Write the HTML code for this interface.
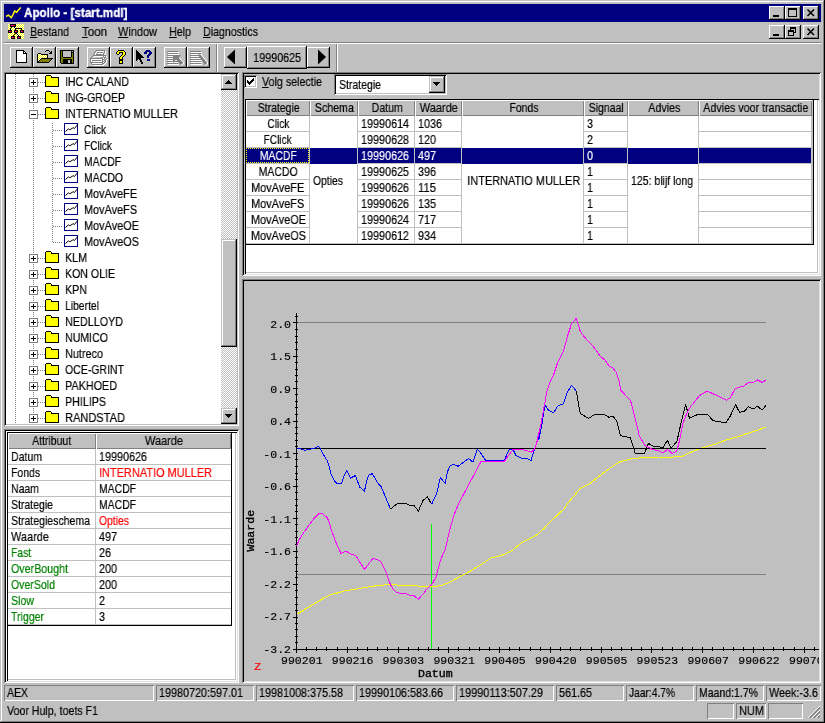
<!DOCTYPE html>
<html lang="nl"><head><meta charset="utf-8"><title>Apollo - [start.mdl]</title>
<style>
html,body{margin:0;padding:0;background:#c0c0c0;}
body{width:825px;height:723px;overflow:hidden;position:relative;font-family:"Liberation Sans",sans-serif;font-size:13px;color:#000;}
#win{position:absolute;left:0;top:0;width:825px;height:723px;background:#c0c0c0;overflow:hidden;}
.t{will-change:transform;-webkit-text-stroke:0.2px;}
#win div,#win span,#win svg{position:absolute;box-sizing:border-box;}
.t{white-space:nowrap;line-height:16px;height:16px;transform-origin:0 0;transform:scaleX(0.846);font-size:13px;}
.t u{text-decoration:underline;text-underline-offset:1px;text-decoration-thickness:1px;}
.tb{font-weight:bold;color:#fff;-webkit-text-stroke:0.35px;}
.btn{background:#c0c0c0;box-shadow:inset -1px -1px 0 #000,inset 1px 1px 0 #fff,inset -2px -2px 0 #808080;}
.sbtn{background:#c0c0c0;box-shadow:inset -1px -1px 0 #000,inset 1px 1px 0 #c0c0c0,inset -2px -2px 0 #808080,inset 2px 2px 0 #fff;}
.sunk{box-shadow:inset 1px 1px 0 #808080,inset -1px -1px 0 #fff;}
.pane{box-shadow:inset 1px 1px 0 #808080,inset -1px -1px 0 #fff,inset 2px 2px 0 #000,inset -2px -2px 0 #c0c0c0;}
.pane2{box-shadow:inset 1px 1px 0 #808080,inset -1px -1px 0 #fff,inset 2px 2px 0 #000,inset -2px -2px 0 #dfdfdf;}
.gridwin{background:#fff;box-shadow:inset 1px 1px 0 #000,inset -1px -1px 0 #fff,inset -2px -2px 0 #c0c0c0;}
.dither{background-image:conic-gradient(#fff 25%,#c0c0c0 0 50%,#fff 0 75%,#c0c0c0 0);background-size:2px 2px;}
.mono{font-family:"Liberation Mono",monospace;}
svg{overflow:visible;}
</style></head>
<body>
<div id="win">
<div style="left:0px;top:0px;width:825px;height:723px;box-shadow:inset -1px -1px 0 #000,inset 1px 1px 0 #c0c0c0,inset -2px -2px 0 #808080,inset 2px 2px 0 #fff;"></div>
<div id="titlebar" style="left:4px;top:4px;width:817px;height:18px;background:#000080;">
<svg width="16" height="16" style="left:2px;top:1px"><polyline points="0,11.4 2.5,10.2 5.3,12.6 7,9.6 8.6,6 10.7,7.2 12.2,5.3 13.5,4.1 14.7,2.3" fill="none" stroke="#ffff00" stroke-width="1.5"/></svg>
<span class="t tb" style="left:20px;top:1px;transform:scaleX(.895);">Apollo - [start.mdl]</span>
<div class="btn" style="left:765px;top:2px;width:16px;height:14px;"><div style="left:4px;top:9px;width:6px;height:2px;background:#000"></div></div>
<div class="btn" style="left:781px;top:2px;width:16px;height:14px;"><div style="left:3px;top:2px;width:9px;height:9px;border:1px solid #000;border-top-width:2px"></div></div>
<div class="btn" style="left:799px;top:2px;width:16px;height:14px;"><svg width="16" height="14" style="left:0;top:0"><path d="M4.5 3.5 L11 10 M11 3.5 L4.5 10" stroke="#000" stroke-width="1.6" fill="none"/></svg></div>
</div>
<div id="menubar" style="left:4px;top:22px;width:817px;height:20px;">
<svg width="16" height="15" style="left:4px;top:2px;overflow:hidden" shape-rendering="crispEdges"><defs><pattern id="dy" width="2" height="2" patternUnits="userSpaceOnUse"><rect width="2" height="2" fill="#ffff00"/><rect width="1" height="1" fill="#fff"/><rect x="1" y="1" width="1" height="1" fill="#fff"/></pattern></defs><rect width="16" height="16" fill="url(#dy)"/><g fill="#000"><rect x="2" y="0" width="6" height="3"/><rect x="0" y="6" width="4" height="3"/><rect x="6" y="6" width="4" height="3"/><rect x="12" y="6" width="4" height="3"/><rect x="3" y="12" width="4" height="3"/><rect x="9" y="12" width="4" height="3"/><rect x="3" y="3" width="1" height="1"/><rect x="2" y="4" width="1" height="2"/><rect x="6" y="3" width="1" height="1"/><rect x="7" y="4" width="1" height="2"/><rect x="8" y="4" width="6" height="1"/><rect x="13" y="5" width="1" height="1"/><rect x="7" y="9" width="2" height="1"/><rect x="6" y="10" width="1" height="1"/><rect x="5" y="11" width="1" height="1"/><rect x="9" y="10" width="1" height="1"/><rect x="10" y="11" width="1" height="1"/></g><g fill="#ff00c0"><rect x="3" y="1" width="2" height="1"/><rect x="1" y="7" width="1" height="1"/><rect x="7" y="7" width="1" height="1"/><rect x="13" y="7" width="1" height="1"/><rect x="4" y="13" width="1" height="1"/><rect x="10" y="13" width="1" height="1"/></g><g fill="#ff0000"><rect x="5" y="1" width="2" height="1"/><rect x="2" y="7" width="1" height="1"/><rect x="8" y="7" width="1" height="1"/><rect x="14" y="7" width="1" height="1"/><rect x="5" y="13" width="1" height="1"/><rect x="11" y="13" width="1" height="1"/></g></svg>
<span class="t" style="left:26px;top:2px;transform:scaleX(0.818);"><u>B</u>estand</span>
<span class="t" style="left:78px;top:2px;transform:scaleX(0.887);"><u>T</u>oon</span>
<span class="t" style="left:114px;top:2px;transform:scaleX(0.843);"><u>W</u>indow</span>
<span class="t" style="left:165px;top:2px;transform:scaleX(0.823);"><u>H</u>elp</span>
<span class="t" style="left:199px;top:2px;transform:scaleX(0.818);"><u>D</u>iagnostics</span>
<div class="btn" style="left:765px;top:3px;width:16px;height:14px;"><div style="left:4px;top:9px;width:6px;height:2px;background:#000"></div></div>
<div class="btn" style="left:781px;top:3px;width:16px;height:14px;"><div style="left:5px;top:2px;width:6px;height:6px;border:1px solid #000;border-top-width:2px"></div><div style="left:3px;top:5px;width:6px;height:6px;border:1px solid #000;border-top-width:2px;background:#c0c0c0"></div></div>
<div class="btn" style="left:799px;top:3px;width:16px;height:14px;"><svg width="16" height="14" style="left:0;top:0"><path d="M4.5 3.5 L11 10 M11 3.5 L4.5 10" stroke="#000" stroke-width="1.6" fill="none"/></svg></div>
</div>
<div style="left:4px;top:42px;width:817px;height:1px;background:#808080;"></div>
<div style="left:4px;top:43px;width:817px;height:1px;background:#fff;"></div>
<div id="toolbar" style="left:4px;top:44px;width:817px;height:28px;">
<div class="btn" style="left:6px;top:3px;width:23px;height:21px;"><svg width="23" height="21" style="left:0;top:0" shape-rendering="crispEdges"><path d="M6.5 3.5h7l3 3v9h-10z" fill="#fff" stroke="#000"/><path d="M13.5 3.5v3h3" fill="none" stroke="#000"/></svg></div>
<div class="btn" style="left:29px;top:3px;width:23px;height:21px;"><svg width="23" height="21" style="left:0;top:0" shape-rendering="crispEdges"><rect x="13" y="3" width="3" height="1" fill="#000"/><rect x="12" y="4" width="1" height="1" fill="#000"/><rect x="16" y="4" width="1" height="1" fill="#000"/><rect x="18" y="4" width="1" height="1" fill="#000"/><rect x="17" y="5" width="2" height="1" fill="#000"/><rect x="5" y="6" width="3" height="1" fill="#000"/><rect x="16" y="6" width="3" height="1" fill="#000"/><rect x="4" y="7" width="1" height="1" fill="#000"/><rect x="5" y="7" width="1" height="1" fill="#fff"/><rect x="6" y="7" width="1" height="1" fill="#ffff00"/><rect x="7" y="7" width="1" height="1" fill="#fff"/><rect x="8" y="7" width="7" height="1" fill="#000"/><rect x="4" y="8" width="1" height="1" fill="#000"/><rect x="5" y="8" width="1" height="1" fill="#ffff00"/><rect x="6" y="8" width="1" height="1" fill="#fff"/><rect x="7" y="8" width="1" height="1" fill="#ffff00"/><rect x="8" y="8" width="1" height="1" fill="#fff"/><rect x="9" y="8" width="1" height="1" fill="#ffff00"/><rect x="10" y="8" width="1" height="1" fill="#fff"/><rect x="11" y="8" width="1" height="1" fill="#ffff00"/><rect x="12" y="8" width="1" height="1" fill="#fff"/><rect x="13" y="8" width="1" height="1" fill="#ffff00"/><rect x="14" y="8" width="1" height="1" fill="#000"/><rect x="4" y="9" width="1" height="1" fill="#000"/><rect x="5" y="9" width="1" height="1" fill="#fff"/><rect x="6" y="9" width="1" height="1" fill="#ffff00"/><rect x="7" y="9" width="1" height="1" fill="#fff"/><rect x="8" y="9" width="1" height="1" fill="#ffff00"/><rect x="9" y="9" width="1" height="1" fill="#fff"/><rect x="10" y="9" width="1" height="1" fill="#ffff00"/><rect x="11" y="9" width="1" height="1" fill="#fff"/><rect x="12" y="9" width="1" height="1" fill="#ffff00"/><rect x="13" y="9" width="1" height="1" fill="#fff"/><rect x="14" y="9" width="1" height="1" fill="#000"/><rect x="4" y="10" width="1" height="1" fill="#000"/><rect x="5" y="10" width="1" height="1" fill="#ffff00"/><rect x="6" y="10" width="1" height="1" fill="#fff"/><rect x="7" y="10" width="1" height="1" fill="#ffff00"/><rect x="8" y="10" width="1" height="1" fill="#fff"/><rect x="9" y="10" width="1" height="1" fill="#ffff00"/><rect x="10" y="10" width="1" height="1" fill="#fff"/><rect x="11" y="10" width="1" height="1" fill="#ffff00"/><rect x="12" y="10" width="1" height="1" fill="#fff"/><rect x="13" y="10" width="1" height="1" fill="#ffff00"/><rect x="14" y="10" width="1" height="1" fill="#000"/><rect x="4" y="11" width="1" height="1" fill="#000"/><rect x="5" y="11" width="1" height="1" fill="#fff"/><rect x="6" y="11" width="1" height="1" fill="#ffff00"/><rect x="7" y="11" width="1" height="1" fill="#fff"/><rect x="8" y="11" width="12" height="1" fill="#000"/><rect x="4" y="12" width="1" height="1" fill="#000"/><rect x="5" y="12" width="1" height="1" fill="#ffff00"/><rect x="6" y="12" width="1" height="1" fill="#fff"/><rect x="7" y="12" width="1" height="1" fill="#000"/><rect x="8" y="12" width="10" height="1" fill="#808000"/><rect x="18" y="12" width="1" height="1" fill="#000"/><rect x="4" y="13" width="1" height="1" fill="#000"/><rect x="5" y="13" width="1" height="1" fill="#fff"/><rect x="6" y="13" width="1" height="1" fill="#000"/><rect x="7" y="13" width="10" height="1" fill="#808000"/><rect x="17" y="13" width="1" height="1" fill="#000"/><rect x="4" y="14" width="2" height="1" fill="#000"/><rect x="6" y="14" width="10" height="1" fill="#808000"/><rect x="16" y="14" width="1" height="1" fill="#000"/><rect x="4" y="15" width="12" height="1" fill="#000"/></svg></div>
<div class="btn" style="left:52px;top:3px;width:23px;height:21px;"><svg width="23" height="21" style="left:0;top:0" shape-rendering="crispEdges"><rect x="4" y="3" width="14" height="1" fill="#000"/><rect x="4" y="4" width="1" height="1" fill="#000"/><rect x="5" y="4" width="1" height="1" fill="#808000"/><rect x="6" y="4" width="1" height="1" fill="#000"/><rect x="7" y="4" width="8" height="1" fill="#c0c0c0"/><rect x="15" y="4" width="1" height="1" fill="#000"/><rect x="16" y="4" width="1" height="1" fill="#c0c0c0"/><rect x="17" y="4" width="1" height="1" fill="#000"/><rect x="4" y="5" width="1" height="1" fill="#000"/><rect x="5" y="5" width="1" height="1" fill="#808000"/><rect x="6" y="5" width="1" height="1" fill="#000"/><rect x="7" y="5" width="8" height="1" fill="#c0c0c0"/><rect x="15" y="5" width="3" height="1" fill="#000"/><rect x="4" y="6" width="1" height="1" fill="#000"/><rect x="5" y="6" width="1" height="1" fill="#808000"/><rect x="6" y="6" width="1" height="1" fill="#000"/><rect x="7" y="6" width="8" height="1" fill="#c0c0c0"/><rect x="15" y="6" width="1" height="1" fill="#000"/><rect x="16" y="6" width="1" height="1" fill="#808000"/><rect x="17" y="6" width="1" height="1" fill="#000"/><rect x="4" y="7" width="1" height="1" fill="#000"/><rect x="5" y="7" width="1" height="1" fill="#808000"/><rect x="6" y="7" width="1" height="1" fill="#000"/><rect x="7" y="7" width="8" height="1" fill="#c0c0c0"/><rect x="15" y="7" width="1" height="1" fill="#000"/><rect x="16" y="7" width="1" height="1" fill="#808000"/><rect x="17" y="7" width="1" height="1" fill="#000"/><rect x="4" y="8" width="1" height="1" fill="#000"/><rect x="5" y="8" width="1" height="1" fill="#808000"/><rect x="6" y="8" width="1" height="1" fill="#000"/><rect x="7" y="8" width="8" height="1" fill="#c0c0c0"/><rect x="15" y="8" width="1" height="1" fill="#000"/><rect x="16" y="8" width="1" height="1" fill="#808000"/><rect x="17" y="8" width="1" height="1" fill="#000"/><rect x="4" y="9" width="1" height="1" fill="#000"/><rect x="5" y="9" width="1" height="1" fill="#808000"/><rect x="6" y="9" width="1" height="1" fill="#000"/><rect x="7" y="9" width="8" height="1" fill="#c0c0c0"/><rect x="15" y="9" width="1" height="1" fill="#000"/><rect x="16" y="9" width="1" height="1" fill="#808000"/><rect x="17" y="9" width="1" height="1" fill="#000"/><rect x="4" y="10" width="1" height="1" fill="#000"/><rect x="5" y="10" width="2" height="1" fill="#808000"/><rect x="7" y="10" width="8" height="1" fill="#000"/><rect x="15" y="10" width="2" height="1" fill="#808000"/><rect x="17" y="10" width="1" height="1" fill="#000"/><rect x="4" y="11" width="1" height="1" fill="#000"/><rect x="5" y="11" width="12" height="1" fill="#808000"/><rect x="17" y="11" width="1" height="1" fill="#000"/><rect x="4" y="12" width="1" height="1" fill="#000"/><rect x="5" y="12" width="2" height="1" fill="#808000"/><rect x="7" y="12" width="9" height="1" fill="#000"/><rect x="16" y="12" width="1" height="1" fill="#808000"/><rect x="17" y="12" width="1" height="1" fill="#000"/><rect x="4" y="13" width="1" height="1" fill="#000"/><rect x="5" y="13" width="2" height="1" fill="#808000"/><rect x="7" y="13" width="5" height="1" fill="#000"/><rect x="12" y="13" width="2" height="1" fill="#c0c0c0"/><rect x="14" y="13" width="2" height="1" fill="#000"/><rect x="16" y="13" width="1" height="1" fill="#808000"/><rect x="17" y="13" width="1" height="1" fill="#000"/><rect x="4" y="14" width="1" height="1" fill="#000"/><rect x="5" y="14" width="2" height="1" fill="#808000"/><rect x="7" y="14" width="5" height="1" fill="#000"/><rect x="12" y="14" width="2" height="1" fill="#c0c0c0"/><rect x="14" y="14" width="2" height="1" fill="#000"/><rect x="16" y="14" width="1" height="1" fill="#808000"/><rect x="17" y="14" width="1" height="1" fill="#000"/><rect x="4" y="15" width="1" height="1" fill="#000"/><rect x="5" y="15" width="2" height="1" fill="#808000"/><rect x="7" y="15" width="5" height="1" fill="#000"/><rect x="12" y="15" width="2" height="1" fill="#c0c0c0"/><rect x="14" y="15" width="2" height="1" fill="#000"/><rect x="16" y="15" width="1" height="1" fill="#808000"/><rect x="17" y="15" width="1" height="1" fill="#000"/><rect x="5" y="16" width="13" height="1" fill="#000"/></svg></div>
<div class="btn" style="left:83px;top:3px;width:23px;height:21px;"><svg width="23" height="21" style="left:0;top:0" shape-rendering="crispEdges"><rect x="10" y="4" width="7" height="1" fill="#fff"/><rect x="18" y="4" width="1" height="1" fill="#fff"/><rect x="9" y="5" width="1" height="1" fill="#fff"/><rect x="18" y="5" width="1" height="1" fill="#fff"/><rect x="8" y="6" width="1" height="1" fill="#fff"/><rect x="11" y="6" width="5" height="1" fill="#fff"/><rect x="18" y="6" width="1" height="1" fill="#fff"/><rect x="8" y="7" width="1" height="1" fill="#fff"/><rect x="17" y="7" width="1" height="1" fill="#fff"/><rect x="7" y="9" width="9" height="1" fill="#fff"/><rect x="17" y="9" width="1" height="1" fill="#fff"/><rect x="19" y="9" width="1" height="1" fill="#fff"/><rect x="6" y="10" width="1" height="1" fill="#fff"/><rect x="19" y="10" width="1" height="1" fill="#fff"/><rect x="16" y="11" width="1" height="1" fill="#fff"/><rect x="18" y="11" width="1" height="1" fill="#fff"/><rect x="4" y="12" width="11" height="1" fill="#fff"/><rect x="20" y="12" width="1" height="1" fill="#fff"/><rect x="4" y="13" width="1" height="1" fill="#fff"/><rect x="16" y="13" width="1" height="1" fill="#fff"/><rect x="19" y="13" width="1" height="1" fill="#fff"/><rect x="4" y="14" width="1" height="1" fill="#fff"/><rect x="6" y="14" width="9" height="1" fill="#fff"/><rect x="19" y="14" width="1" height="1" fill="#fff"/><rect x="16" y="15" width="1" height="1" fill="#fff"/><rect x="19" y="15" width="1" height="1" fill="#fff"/><rect x="5" y="16" width="10" height="1" fill="#fff"/><rect x="18" y="16" width="1" height="1" fill="#fff"/><rect x="16" y="17" width="2" height="1" fill="#fff"/><rect x="6" y="18" width="11" height="1" fill="#fff"/><rect x="9" y="3" width="9" height="1" fill="#808080"/><rect x="8" y="4" width="1" height="1" fill="#808080"/><rect x="17" y="4" width="1" height="1" fill="#808080"/><rect x="7" y="5" width="1" height="1" fill="#808080"/><rect x="10" y="5" width="6" height="1" fill="#808080"/><rect x="17" y="5" width="1" height="1" fill="#808080"/><rect x="7" y="6" width="1" height="1" fill="#808080"/><rect x="16" y="6" width="1" height="1" fill="#808080"/><rect x="6" y="7" width="1" height="1" fill="#808080"/><rect x="9" y="7" width="6" height="1" fill="#808080"/><rect x="16" y="7" width="1" height="1" fill="#808080"/><rect x="6" y="8" width="13" height="1" fill="#808080"/><rect x="5" y="9" width="1" height="1" fill="#808080"/><rect x="16" y="9" width="1" height="1" fill="#808080"/><rect x="18" y="9" width="1" height="1" fill="#808080"/><rect x="4" y="10" width="1" height="1" fill="#808080"/><rect x="15" y="10" width="1" height="1" fill="#808080"/><rect x="17" y="10" width="2" height="1" fill="#808080"/><rect x="3" y="11" width="13" height="1" fill="#808080"/><rect x="17" y="11" width="1" height="1" fill="#808080"/><rect x="19" y="11" width="1" height="1" fill="#808080"/><rect x="3" y="12" width="1" height="1" fill="#808080"/><rect x="15" y="12" width="2" height="1" fill="#808080"/><rect x="18" y="12" width="1" height="1" fill="#808080"/><rect x="3" y="13" width="1" height="1" fill="#808080"/><rect x="5" y="13" width="9" height="1" fill="#808080"/><rect x="15" y="13" width="1" height="1" fill="#808080"/><rect x="17" y="13" width="2" height="1" fill="#808080"/><rect x="3" y="14" width="1" height="1" fill="#808080"/><rect x="15" y="14" width="2" height="1" fill="#808080"/><rect x="18" y="14" width="1" height="1" fill="#808080"/><rect x="3" y="15" width="13" height="1" fill="#808080"/><rect x="17" y="15" width="1" height="1" fill="#808080"/><rect x="4" y="16" width="1" height="1" fill="#808080"/><rect x="15" y="16" width="2" height="1" fill="#808080"/><rect x="5" y="17" width="11" height="1" fill="#808080"/></svg></div>
<div class="btn" style="left:106px;top:3px;width:23px;height:21px;"><svg width="23" height="21" style="left:0;top:0" shape-rendering="crispEdges"><rect x="8" y="3" width="6" height="1" fill="#000"/><rect x="7" y="4" width="1" height="1" fill="#000"/><rect x="8" y="4" width="6" height="1" fill="#ffff00"/><rect x="14" y="4" width="1" height="1" fill="#000"/><rect x="6" y="5" width="1" height="1" fill="#000"/><rect x="7" y="5" width="2" height="1" fill="#ffff00"/><rect x="9" y="5" width="4" height="1" fill="#000"/><rect x="13" y="5" width="2" height="1" fill="#ffff00"/><rect x="15" y="5" width="1" height="1" fill="#000"/><rect x="6" y="6" width="1" height="1" fill="#000"/><rect x="7" y="6" width="2" height="1" fill="#ffff00"/><rect x="9" y="6" width="1" height="1" fill="#000"/><rect x="12" y="6" width="1" height="1" fill="#000"/><rect x="13" y="6" width="2" height="1" fill="#ffff00"/><rect x="15" y="6" width="1" height="1" fill="#000"/><rect x="7" y="7" width="2" height="1" fill="#000"/><rect x="12" y="7" width="1" height="1" fill="#000"/><rect x="13" y="7" width="2" height="1" fill="#ffff00"/><rect x="15" y="7" width="1" height="1" fill="#000"/><rect x="11" y="8" width="1" height="1" fill="#000"/><rect x="12" y="8" width="2" height="1" fill="#ffff00"/><rect x="14" y="8" width="1" height="1" fill="#000"/><rect x="10" y="9" width="1" height="1" fill="#000"/><rect x="11" y="9" width="2" height="1" fill="#ffff00"/><rect x="13" y="9" width="1" height="1" fill="#000"/><rect x="9" y="10" width="1" height="1" fill="#000"/><rect x="10" y="10" width="2" height="1" fill="#ffff00"/><rect x="12" y="10" width="1" height="1" fill="#000"/><rect x="9" y="11" width="1" height="1" fill="#000"/><rect x="10" y="11" width="2" height="1" fill="#ffff00"/><rect x="12" y="11" width="1" height="1" fill="#000"/><rect x="9" y="12" width="4" height="1" fill="#000"/><rect x="9" y="13" width="4" height="1" fill="#000"/><rect x="9" y="14" width="1" height="1" fill="#000"/><rect x="10" y="14" width="2" height="1" fill="#ffff00"/><rect x="12" y="14" width="1" height="1" fill="#000"/><rect x="9" y="15" width="1" height="1" fill="#000"/><rect x="10" y="15" width="2" height="1" fill="#ffff00"/><rect x="12" y="15" width="1" height="1" fill="#000"/><rect x="9" y="16" width="4" height="1" fill="#000"/></svg></div>
<div class="btn" style="left:129px;top:3px;width:23px;height:21px;"><svg width="23" height="21" style="left:0;top:0" shape-rendering="crispEdges"><rect x="3" y="3" width="1" height="1" fill="#000"/><rect x="3" y="4" width="2" height="1" fill="#000"/><rect x="3" y="5" width="3" height="1" fill="#000"/><rect x="3" y="6" width="4" height="1" fill="#000"/><rect x="3" y="7" width="5" height="1" fill="#000"/><rect x="3" y="8" width="6" height="1" fill="#000"/><rect x="3" y="9" width="7" height="1" fill="#000"/><rect x="3" y="10" width="8" height="1" fill="#000"/><rect x="3" y="11" width="5" height="1" fill="#000"/><rect x="3" y="12" width="2" height="1" fill="#000"/><rect x="6" y="12" width="2" height="1" fill="#000"/><rect x="3" y="13" width="1" height="1" fill="#000"/><rect x="7" y="13" width="2" height="1" fill="#000"/><rect x="7" y="14" width="2" height="1" fill="#000"/><rect x="8" y="15" width="2" height="1" fill="#000"/><rect x="8" y="16" width="2" height="1" fill="#000"/><rect x="13" y="3" width="4" height="1" fill="#000080"/><rect x="12" y="4" width="6" height="1" fill="#000080"/><rect x="11" y="5" width="3" height="1" fill="#000080"/><rect x="16" y="5" width="3" height="1" fill="#000080"/><rect x="11" y="6" width="3" height="1" fill="#000080"/><rect x="16" y="6" width="3" height="1" fill="#000080"/><rect x="15" y="7" width="3" height="1" fill="#000080"/><rect x="14" y="8" width="3" height="1" fill="#000080"/><rect x="14" y="9" width="2" height="1" fill="#000080"/><rect x="14" y="10" width="2" height="1" fill="#000080"/><rect x="14" y="12" width="3" height="1" fill="#000080"/><rect x="14" y="13" width="3" height="1" fill="#000080"/></svg></div>
<div class="btn" style="left:160px;top:3px;width:23px;height:21px;"><svg width="23" height="21" style="left:0;top:0" shape-rendering="crispEdges"><rect x="3" y="4" width="11" height="1" fill="#808080"/><rect x="4" y="5" width="11" height="1" fill="#fff"/><rect x="3" y="6" width="11" height="1" fill="#808080"/><rect x="4" y="7" width="11" height="1" fill="#fff"/><rect x="3" y="8" width="11" height="1" fill="#808080"/><rect x="4" y="9" width="11" height="1" fill="#fff"/><rect x="3" y="10" width="11" height="1" fill="#808080"/><rect x="4" y="11" width="11" height="1" fill="#fff"/><rect x="3" y="12" width="11" height="1" fill="#808080"/><rect x="4" y="13" width="11" height="1" fill="#fff"/><rect x="3" y="14" width="11" height="1" fill="#808080"/><rect x="4" y="15" width="11" height="1" fill="#fff"/><rect x="3" y="16" width="11" height="1" fill="#808080"/><rect x="4" y="17" width="11" height="1" fill="#fff"/><path d="M9 8h8l-2.500 2.500 5 5.500-3 2-4.500-5.500-3 3.500z" fill="#808080" shape-rendering="auto"/><path d="M17 18.500l3-2.500-4.500-5" stroke="#fff" fill="none" shape-rendering="auto"/></svg></div>
<div class="btn" style="left:183px;top:3px;width:23px;height:21px;"><svg width="23" height="21" style="left:0;top:0" shape-rendering="crispEdges"><rect x="3" y="4" width="11" height="1" fill="#808080"/><rect x="4" y="5" width="11" height="1" fill="#fff"/><rect x="3" y="6" width="11" height="1" fill="#808080"/><rect x="4" y="7" width="11" height="1" fill="#fff"/><rect x="3" y="8" width="11" height="1" fill="#808080"/><rect x="4" y="9" width="11" height="1" fill="#fff"/><rect x="3" y="10" width="11" height="1" fill="#808080"/><rect x="4" y="11" width="11" height="1" fill="#fff"/><rect x="3" y="12" width="11" height="1" fill="#808080"/><rect x="4" y="13" width="11" height="1" fill="#fff"/><rect x="3" y="14" width="11" height="1" fill="#808080"/><rect x="4" y="15" width="11" height="1" fill="#fff"/><rect x="3" y="16" width="11" height="1" fill="#808080"/><rect x="4" y="17" width="11" height="1" fill="#fff"/><path d="M11 8l2-1 7 9-2 2z" fill="#808080" shape-rendering="auto"/><path d="M18.500 18.500l2.500-2.500-6.500-8" stroke="#fff" fill="none" shape-rendering="auto"/></svg></div>
<div style="left:212px;top:0px;width:1px;height:28px;background:#808080;"></div>
<div style="left:213px;top:0px;width:1px;height:28px;background:#fff;"></div>
<div style="left:332px;top:0px;width:1px;height:28px;background:#808080;"></div>
<div style="left:333px;top:0px;width:1px;height:28px;background:#fff;"></div>
<div class="btn" style="left:220px;top:3px;width:23px;height:21px;"><svg width="23" height="21" style="left:0;top:0"><path d="M11 2.500v15l-8-7.500z" fill="#000"/></svg></div>
<div class="btn" style="left:243px;top:2px;width:60px;height:23px;"><span class="t" style="left:-7.15px;top:4px;width:74.3px;text-align:center;transform-origin:50% 0;transform:scaleX(0.83);">19990625</span></div>
<div class="btn" style="left:303px;top:3px;width:23px;height:21px;"><svg width="23" height="21" style="left:0;top:0"><path d="M11 2.500v15l8-7.500z" fill="#000"/></svg></div>
</div>
<div id="tree" class="pane" style="left:4px;top:72px;width:235px;height:354px;background:#fff;">
<div style="left:2px;top:2px;width:215px;height:350px;overflow:hidden;">
<svg width="215" height="352" style="left:0;top:0" shape-rendering="crispEdges"><g stroke="#808080" stroke-dasharray="1 1" fill="none"><path d="M9.5 0v352"/><path d="M27.5 0v352"/><path d="M46.5 49v120"/><path d="M32 8.5h7"/><path d="M32 24.5h7"/><path d="M32 40.5h7"/><path d="M47 56.5h10"/><path d="M47 72.5h10"/><path d="M47 88.5h10"/><path d="M47 104.5h10"/><path d="M47 120.5h10"/><path d="M47 136.5h10"/><path d="M47 152.5h10"/><path d="M47 168.5h10"/><path d="M32 184.5h7"/><path d="M32 200.5h7"/><path d="M32 216.5h7"/><path d="M32 232.5h7"/><path d="M32 248.5h7"/><path d="M32 264.5h7"/><path d="M32 280.5h7"/><path d="M32 296.5h7"/><path d="M32 312.5h7"/><path d="M32 328.5h7"/><path d="M32 344.5h7"/></g><rect x="23.5" y="4.5" width="8" height="8" fill="#fff" stroke="#808080"/><path d="M25 8.5h5" stroke="#000"/><path d="M27.5 6v5" stroke="#000"/><path d="M39.5 2.5l1-1h4l1 1v1h7v9h-13z" fill="#ffff00" stroke="#000"/><rect x="23.5" y="20.5" width="8" height="8" fill="#fff" stroke="#808080"/><path d="M25 24.5h5" stroke="#000"/><path d="M27.5 22v5" stroke="#000"/><path d="M39.5 18.5l1-1h4l1 1v1h7v9h-13z" fill="#ffff00" stroke="#000"/><rect x="23.5" y="36.5" width="8" height="8" fill="#fff" stroke="#808080"/><path d="M25 40.5h5" stroke="#000"/><path d="M39.5 34.5l1-1h4l1 1v1h7v9h-13z" fill="#ffff00" stroke="#000"/><rect x="58.5" y="49.5" width="13" height="11" fill="#fff" stroke="#000080"/><path d="M59.5 57.5l3-2.700 1.300 1 3.400-2.100 1.300 0.800 2.900-3.700" stroke="#000" fill="none" shape-rendering="auto"/><rect x="58.5" y="65.5" width="13" height="11" fill="#fff" stroke="#000080"/><path d="M59.5 73.5l3-2.700 1.300 1 3.400-2.100 1.300 0.800 2.900-3.700" stroke="#000" fill="none" shape-rendering="auto"/><rect x="58.5" y="81.5" width="13" height="11" fill="#fff" stroke="#000080"/><path d="M59.5 89.5l3-2.700 1.300 1 3.400-2.100 1.300 0.800 2.900-3.700" stroke="#000" fill="none" shape-rendering="auto"/><rect x="58.5" y="97.5" width="13" height="11" fill="#fff" stroke="#000080"/><path d="M59.5 105.5l3-2.700 1.300 1 3.400-2.100 1.300 0.800 2.900-3.700" stroke="#000" fill="none" shape-rendering="auto"/><rect x="58.5" y="113.5" width="13" height="11" fill="#fff" stroke="#000080"/><path d="M59.5 121.5l3-2.700 1.300 1 3.400-2.100 1.300 0.800 2.900-3.700" stroke="#000" fill="none" shape-rendering="auto"/><rect x="58.5" y="129.5" width="13" height="11" fill="#fff" stroke="#000080"/><path d="M59.5 137.5l3-2.700 1.300 1 3.400-2.100 1.300 0.800 2.900-3.700" stroke="#000" fill="none" shape-rendering="auto"/><rect x="58.5" y="145.5" width="13" height="11" fill="#fff" stroke="#000080"/><path d="M59.5 153.5l3-2.700 1.300 1 3.400-2.100 1.300 0.800 2.900-3.700" stroke="#000" fill="none" shape-rendering="auto"/><rect x="58.5" y="161.5" width="13" height="11" fill="#fff" stroke="#000080"/><path d="M59.5 169.5l3-2.700 1.300 1 3.400-2.100 1.300 0.800 2.900-3.700" stroke="#000" fill="none" shape-rendering="auto"/><rect x="23.5" y="180.5" width="8" height="8" fill="#fff" stroke="#808080"/><path d="M25 184.5h5" stroke="#000"/><path d="M27.5 182v5" stroke="#000"/><path d="M39.5 178.5l1-1h4l1 1v1h7v9h-13z" fill="#ffff00" stroke="#000"/><rect x="23.5" y="196.5" width="8" height="8" fill="#fff" stroke="#808080"/><path d="M25 200.5h5" stroke="#000"/><path d="M27.5 198v5" stroke="#000"/><path d="M39.5 194.5l1-1h4l1 1v1h7v9h-13z" fill="#ffff00" stroke="#000"/><rect x="23.5" y="212.5" width="8" height="8" fill="#fff" stroke="#808080"/><path d="M25 216.5h5" stroke="#000"/><path d="M27.5 214v5" stroke="#000"/><path d="M39.5 210.5l1-1h4l1 1v1h7v9h-13z" fill="#ffff00" stroke="#000"/><rect x="23.5" y="228.5" width="8" height="8" fill="#fff" stroke="#808080"/><path d="M25 232.5h5" stroke="#000"/><path d="M27.5 230v5" stroke="#000"/><path d="M39.5 226.5l1-1h4l1 1v1h7v9h-13z" fill="#ffff00" stroke="#000"/><rect x="23.5" y="244.5" width="8" height="8" fill="#fff" stroke="#808080"/><path d="M25 248.5h5" stroke="#000"/><path d="M27.5 246v5" stroke="#000"/><path d="M39.5 242.5l1-1h4l1 1v1h7v9h-13z" fill="#ffff00" stroke="#000"/><rect x="23.5" y="260.5" width="8" height="8" fill="#fff" stroke="#808080"/><path d="M25 264.5h5" stroke="#000"/><path d="M27.5 262v5" stroke="#000"/><path d="M39.5 258.5l1-1h4l1 1v1h7v9h-13z" fill="#ffff00" stroke="#000"/><rect x="23.5" y="276.5" width="8" height="8" fill="#fff" stroke="#808080"/><path d="M25 280.5h5" stroke="#000"/><path d="M27.5 278v5" stroke="#000"/><path d="M39.5 274.5l1-1h4l1 1v1h7v9h-13z" fill="#ffff00" stroke="#000"/><rect x="23.5" y="292.5" width="8" height="8" fill="#fff" stroke="#808080"/><path d="M25 296.5h5" stroke="#000"/><path d="M27.5 294v5" stroke="#000"/><path d="M39.5 290.5l1-1h4l1 1v1h7v9h-13z" fill="#ffff00" stroke="#000"/><rect x="23.5" y="308.5" width="8" height="8" fill="#fff" stroke="#808080"/><path d="M25 312.5h5" stroke="#000"/><path d="M27.5 310v5" stroke="#000"/><path d="M39.5 306.5l1-1h4l1 1v1h7v9h-13z" fill="#ffff00" stroke="#000"/><rect x="23.5" y="324.5" width="8" height="8" fill="#fff" stroke="#808080"/><path d="M25 328.5h5" stroke="#000"/><path d="M27.5 326v5" stroke="#000"/><path d="M39.5 322.5l1-1h4l1 1v1h7v9h-13z" fill="#ffff00" stroke="#000"/><rect x="23.5" y="340.5" width="8" height="8" fill="#fff" stroke="#808080"/><path d="M25 344.5h5" stroke="#000"/><path d="M27.5 342v5" stroke="#000"/><path d="M39.5 338.5l1-1h4l1 1v1h7v9h-13z" fill="#ffff00" stroke="#000"/></svg>
<span class="t" style="left:59px;top:0px;transform:scaleX(0.813);">IHC CALAND</span>
<span class="t" style="left:59px;top:16px;transform:scaleX(0.806);">ING-GROEP</span>
<span class="t" style="left:59px;top:32px;transform:scaleX(0.843);">INTERNATIO MULLER</span>
<span class="t" style="left:78px;top:48px;transform:scaleX(0.781);">Click</span>
<span class="t" style="left:78px;top:64px;transform:scaleX(0.775);">FClick</span>
<span class="t" style="left:78px;top:80px;transform:scaleX(0.801);">MACDF</span>
<span class="t" style="left:78px;top:96px;transform:scaleX(0.806);">MACDO</span>
<span class="t" style="left:78px;top:112px;transform:scaleX(0.837);">MovAveFE</span>
<span class="t" style="left:78px;top:128px;transform:scaleX(0.837);">MovAveFS</span>
<span class="t" style="left:78px;top:144px;transform:scaleX(0.84);">MovAveOE</span>
<span class="t" style="left:78px;top:160px;transform:scaleX(0.84);">MovAveOS</span>
<span class="t" style="left:59px;top:176px;transform:scaleX(0.823);">KLM</span>
<span class="t" style="left:59px;top:192px;transform:scaleX(0.814);">KON OLIE</span>
<span class="t" style="left:59px;top:208px;transform:scaleX(0.823);">KPN</span>
<span class="t" style="left:59px;top:224px;transform:scaleX(0.797);">Libertel</span>
<span class="t" style="left:59px;top:240px;transform:scaleX(0.828);">NEDLLOYD</span>
<span class="t" style="left:59px;top:256px;transform:scaleX(0.816);">NUMICO</span>
<span class="t" style="left:59px;top:272px;transform:scaleX(0.835);">Nutreco</span>
<span class="t" style="left:59px;top:288px;transform:scaleX(0.809);">OCE-GRINT</span>
<span class="t" style="left:59px;top:304px;transform:scaleX(0.831);">PAKHOED</span>
<span class="t" style="left:59px;top:320px;transform:scaleX(0.822);">PHILIPS</span>
<span class="t" style="left:59px;top:336px;transform:scaleX(0.85);">RANDSTAD</span>
</div>
<div class="dither" style="left:217px;top:2px;width:16px;height:350px;"></div>
<div class="sbtn" style="left:217px;top:2px;width:16px;height:16px;"><svg width="16" height="16" style="left:0;top:0" shape-rendering="crispEdges"><path d="M4 10h7l-3.500-4z" fill="#000"/></svg></div>
<div class="sbtn" style="left:217px;top:336px;width:16px;height:16px;"><svg width="16" height="16" style="left:0;top:0" shape-rendering="crispEdges"><path d="M4 6h7l-3.500 4z" fill="#000"/></svg></div>
<div class="sbtn" style="left:217px;top:167px;width:16px;height:108px;"></div>
</div>
<div id="attrs" class="pane2" style="left:4px;top:429px;width:235px;height:254px;background:#fff;">
<div class="gridwin" style="left:3px;top:3px;width:230px;height:249px;"></div>
<div style="left:3px;top:3px;width:225px;height:194px;background:#000;"></div>
<div style="left:4px;top:4px;width:223px;height:192px;background:#c0c0c0;"></div>
<div style="left:4px;top:4px;width:88px;height:16px;background:#c0c0c0;box-shadow:inset 1px 1px 0 #fff,inset -1px -1px 0 #808080;"></div>
<div style="left:92px;top:4px;width:135px;height:16px;background:#c0c0c0;box-shadow:inset 1px 1px 0 #fff,inset -1px -1px 0 #808080;"></div>
<span class="t" style="left:-7.6px;top:4px;width:111.2px;text-align:center;transform-origin:50% 0;transform:scaleX(0.806);">Attribuut</span>
<span class="t" style="left:78.5px;top:4px;width:162.0px;text-align:center;transform-origin:50% 0;transform:scaleX(0.844);">Waarde</span>
<div style="left:4px;top:20px;width:87px;height:15px;background:#fff;"></div>
<div style="left:92px;top:20px;width:135px;height:15px;background:#fff;"></div>
<span class="t" style="left:7px;top:20px;color:#000;transform:scaleX(0.81);">Datum</span>
<span class="t" style="left:95px;top:20px;color:#000;transform:scaleX(0.83);">19990626</span>
<div style="left:4px;top:36px;width:87px;height:15px;background:#fff;"></div>
<div style="left:92px;top:36px;width:135px;height:15px;background:#fff;"></div>
<span class="t" style="left:7px;top:36px;color:#000;transform:scaleX(0.803);">Fonds</span>
<span class="t" style="left:95px;top:36px;color:#f00;transform:scaleX(0.843);">INTERNATIO MULLER</span>
<div style="left:4px;top:52px;width:87px;height:15px;background:#fff;"></div>
<div style="left:92px;top:52px;width:135px;height:15px;background:#fff;"></div>
<span class="t" style="left:7px;top:52px;color:#000;transform:scaleX(0.807);">Naam</span>
<span class="t" style="left:95px;top:52px;color:#000;transform:scaleX(0.801);">MACDF</span>
<div style="left:4px;top:68px;width:87px;height:15px;background:#fff;"></div>
<div style="left:92px;top:68px;width:135px;height:15px;background:#fff;"></div>
<span class="t" style="left:7px;top:68px;color:#000;transform:scaleX(0.807);">Strategie</span>
<span class="t" style="left:95px;top:68px;color:#000;transform:scaleX(0.801);">MACDF</span>
<div style="left:4px;top:84px;width:87px;height:15px;background:#fff;"></div>
<div style="left:92px;top:84px;width:135px;height:15px;background:#fff;"></div>
<span class="t" style="left:7px;top:84px;color:#000;transform:scaleX(0.81);">Strategieschema</span>
<span class="t" style="left:95px;top:84px;color:#f00;transform:scaleX(0.798);">Opties</span>
<div style="left:4px;top:100px;width:87px;height:15px;background:#fff;"></div>
<div style="left:92px;top:100px;width:135px;height:15px;background:#fff;"></div>
<span class="t" style="left:7px;top:100px;color:#000;transform:scaleX(0.844);">Waarde</span>
<span class="t" style="left:95px;top:100px;color:#000;transform:scaleX(0.83);">497</span>
<div style="left:4px;top:116px;width:87px;height:15px;background:#fff;"></div>
<div style="left:92px;top:116px;width:135px;height:15px;background:#fff;"></div>
<span class="t" style="left:7px;top:116px;color:#008000;transform:scaleX(0.791);">Fast</span>
<span class="t" style="left:95px;top:116px;color:#000;transform:scaleX(0.83);">26</span>
<div style="left:4px;top:132px;width:87px;height:15px;background:#fff;"></div>
<div style="left:92px;top:132px;width:135px;height:15px;background:#fff;"></div>
<span class="t" style="left:7px;top:132px;color:#008000;transform:scaleX(0.822);">OverBought</span>
<span class="t" style="left:95px;top:132px;color:#000;transform:scaleX(0.83);">200</span>
<div style="left:4px;top:148px;width:87px;height:15px;background:#fff;"></div>
<div style="left:92px;top:148px;width:135px;height:15px;background:#fff;"></div>
<span class="t" style="left:7px;top:148px;color:#008000;transform:scaleX(0.812);">OverSold</span>
<span class="t" style="left:95px;top:148px;color:#000;transform:scaleX(0.83);">200</span>
<div style="left:4px;top:164px;width:87px;height:15px;background:#fff;"></div>
<div style="left:92px;top:164px;width:135px;height:15px;background:#fff;"></div>
<span class="t" style="left:7px;top:164px;color:#008000;transform:scaleX(0.816);">Slow</span>
<span class="t" style="left:95px;top:164px;color:#000;transform:scaleX(0.83);">2</span>
<div style="left:4px;top:180px;width:87px;height:15px;background:#fff;"></div>
<div style="left:92px;top:180px;width:135px;height:15px;background:#fff;"></div>
<span class="t" style="left:7px;top:180px;color:#008000;transform:scaleX(0.811);">Trigger</span>
<span class="t" style="left:95px;top:180px;color:#000;transform:scaleX(0.83);">3</span>
</div>
<div id="tablepane" class="pane2" style="left:242px;top:72px;width:579px;height:204px;">
<div style="left:2px;top:3px;width:13px;height:13px;background:#fff;box-shadow:inset 1px 1px 0 #808080,inset -1px -1px 0 #fff,inset 2px 2px 0 #000,inset -2px -2px 0 #c0c0c0;"><svg width="13" height="13" style="left:0;top:0" shape-rendering="crispEdges"><path d="M3 5v3l2 2 5-5v-3l-5 5z" fill="#000"/></svg></div>
<span class="t" style="left:20px;top:2px;transform:scaleX(0.822);"><u>V</u>olg selectie</span>
<div style="left:92px;top:2px;width:113px;height:21px;background:#fff;box-shadow:inset 1px 1px 0 #808080,inset -1px -1px 0 #fff,inset 2px 2px 0 #000,inset -2px -2px 0 #c0c0c0;"><span class="t" style="left:5px;top:3px;transform:scaleX(0.807);">Strategie</span><div class="sbtn" style="left:95px;top:2px;width:16px;height:17px;"><svg width="16" height="17" style="left:0;top:0" shape-rendering="crispEdges"><path d="M4 6h7l-3.500 4z" fill="#000"/></svg></div></div>
<div class="gridwin" style="left:3px;top:27px;width:574px;height:175px;"></div>
<div style="left:3px;top:27px;width:569px;height:146px;background:#000;"></div>
<div style="left:4px;top:28px;width:567px;height:144px;background:#c0c0c0;"></div>
<div style="left:4px;top:28px;width:64px;height:16px;background:#c0c0c0;box-shadow:inset 1px 1px 0 #fff,inset -1px -1px 0 #808080;"></div>
<span class="t" style="left:-4.15px;top:28px;width:81.3px;text-align:center;transform-origin:50% 0;transform:scaleX(0.807);">Strategie</span>
<div style="left:68px;top:28px;width:48px;height:16px;background:#c0c0c0;box-shadow:inset 1px 1px 0 #fff,inset -1px -1px 0 #808080;"></div>
<span class="t" style="left:62.15px;top:28px;width:60.7px;text-align:center;transform-origin:50% 0;transform:scaleX(0.818);">Schema</span>
<div style="left:116px;top:28px;width:57px;height:16px;background:#c0c0c0;box-shadow:inset 1px 1px 0 #fff,inset -1px -1px 0 #808080;"></div>
<span class="t" style="left:108.8px;top:28px;width:72.4px;text-align:center;transform-origin:50% 0;transform:scaleX(0.81);">Datum</span>
<div style="left:173px;top:28px;width:47px;height:16px;background:#c0c0c0;box-shadow:inset 1px 1px 0 #fff,inset -1px -1px 0 #808080;"></div>
<span class="t" style="left:168.15px;top:28px;width:57.7px;text-align:center;transform-origin:50% 0;transform:scaleX(0.844);">Waarde</span>
<div style="left:220px;top:28px;width:122px;height:16px;background:#c0c0c0;box-shadow:inset 1px 1px 0 #fff,inset -1px -1px 0 #808080;"></div>
<span class="t" style="left:204.55px;top:28px;width:153.9px;text-align:center;transform-origin:50% 0;transform:scaleX(0.803);">Fonds</span>
<div style="left:342px;top:28px;width:44px;height:16px;background:#c0c0c0;box-shadow:inset 1px 1px 0 #fff,inset -1px -1px 0 #808080;"></div>
<span class="t" style="left:336.25px;top:28px;width:56.5px;text-align:center;transform-origin:50% 0;transform:scaleX(0.807);">Signaal</span>
<div style="left:386px;top:28px;width:71px;height:16px;background:#c0c0c0;box-shadow:inset 1px 1px 0 #fff,inset -1px -1px 0 #808080;"></div>
<span class="t" style="left:377.7px;top:28px;width:88.6px;text-align:center;transform-origin:50% 0;transform:scaleX(0.82);">Advies</span>
<div style="left:457px;top:28px;width:113px;height:16px;background:#c0c0c0;box-shadow:inset 1px 1px 0 #fff,inset -1px -1px 0 #808080;"></div>
<span class="t" style="left:444.2px;top:28px;width:139.6px;text-align:center;transform-origin:50% 0;transform:scaleX(0.821);">Advies voor transactie</span>
<div style="left:68px;top:44px;width:47px;height:127px;background:#fff;"></div>
<div style="left:68px;top:76px;width:47px;height:16px;background:#000080;"></div>
<div style="left:220px;top:44px;width:121px;height:127px;background:#fff;"></div>
<div style="left:220px;top:76px;width:121px;height:16px;background:#000080;"></div>
<div style="left:386px;top:44px;width:70px;height:127px;background:#fff;"></div>
<div style="left:386px;top:76px;width:70px;height:16px;background:#000080;"></div>
<div style="left:4px;top:44px;width:63px;height:15px;background:#fff;"></div>
<span class="t" style="left:-5.35px;top:44px;color:#000;width:82.7px;text-align:center;transform-origin:50% 0;transform:scaleX(0.781);">Click</span>
<div style="left:116px;top:44px;width:56px;height:15px;background:#fff;"></div>
<span class="t" style="left:119px;top:44px;color:#000;transform:scaleX(0.83);">19990614</span>
<div style="left:173px;top:44px;width:46px;height:15px;background:#fff;"></div>
<span class="t" style="left:176px;top:44px;color:#000;transform:scaleX(0.83);">1036</span>
<div style="left:342px;top:44px;width:43px;height:15px;background:#fff;"></div>
<span class="t" style="left:345px;top:44px;color:#000;transform:scaleX(0.83);">3</span>
<div style="left:457px;top:44px;width:112px;height:15px;background:#fff;"></div>
<div style="left:4px;top:60px;width:63px;height:15px;background:#fff;"></div>
<span class="t" style="left:-5.65px;top:60px;color:#000;width:83.3px;text-align:center;transform-origin:50% 0;transform:scaleX(0.775);">FClick</span>
<div style="left:116px;top:60px;width:56px;height:15px;background:#fff;"></div>
<span class="t" style="left:119px;top:60px;color:#000;transform:scaleX(0.83);">19990628</span>
<div style="left:173px;top:60px;width:46px;height:15px;background:#fff;"></div>
<span class="t" style="left:176px;top:60px;color:#000;transform:scaleX(0.83);">120</span>
<div style="left:342px;top:60px;width:43px;height:15px;background:#fff;"></div>
<span class="t" style="left:345px;top:60px;color:#000;transform:scaleX(0.83);">2</span>
<div style="left:457px;top:60px;width:112px;height:15px;background:#fff;"></div>
<div style="left:4px;top:76px;width:63px;height:15px;background:#000080;"></div>
<span class="t" style="left:-4.35px;top:76px;color:#fff;width:80.7px;text-align:center;transform-origin:50% 0;transform:scaleX(0.801);">MACDF</span>
<div style="left:116px;top:76px;width:56px;height:15px;background:#000080;"></div>
<span class="t" style="left:119px;top:76px;color:#fff;transform:scaleX(0.83);">19990626</span>
<div style="left:173px;top:76px;width:46px;height:15px;background:#000080;"></div>
<span class="t" style="left:176px;top:76px;color:#fff;transform:scaleX(0.83);">497</span>
<div style="left:342px;top:76px;width:43px;height:15px;background:#000080;"></div>
<span class="t" style="left:345px;top:76px;color:#fff;transform:scaleX(0.83);">0</span>
<div style="left:457px;top:76px;width:112px;height:15px;background:#000080;"></div>
<div style="left:4px;top:92px;width:63px;height:15px;background:#fff;"></div>
<span class="t" style="left:-4.1px;top:92px;color:#000;width:80.2px;text-align:center;transform-origin:50% 0;transform:scaleX(0.806);">MACDO</span>
<div style="left:116px;top:92px;width:56px;height:15px;background:#fff;"></div>
<span class="t" style="left:119px;top:92px;color:#000;transform:scaleX(0.83);">19990625</span>
<div style="left:173px;top:92px;width:46px;height:15px;background:#fff;"></div>
<span class="t" style="left:176px;top:92px;color:#000;transform:scaleX(0.83);">396</span>
<div style="left:342px;top:92px;width:43px;height:15px;background:#fff;"></div>
<span class="t" style="left:345px;top:92px;color:#000;transform:scaleX(0.83);">1</span>
<div style="left:457px;top:92px;width:112px;height:15px;background:#fff;"></div>
<div style="left:4px;top:108px;width:63px;height:15px;background:#fff;"></div>
<span class="t" style="left:-2.65px;top:108px;color:#000;width:77.3px;text-align:center;transform-origin:50% 0;transform:scaleX(0.837);">MovAveFE</span>
<div style="left:116px;top:108px;width:56px;height:15px;background:#fff;"></div>
<span class="t" style="left:119px;top:108px;color:#000;transform:scaleX(0.83);">19990626</span>
<div style="left:173px;top:108px;width:46px;height:15px;background:#fff;"></div>
<span class="t" style="left:176px;top:108px;color:#000;transform:scaleX(0.868);">115</span>
<div style="left:342px;top:108px;width:43px;height:15px;background:#fff;"></div>
<span class="t" style="left:345px;top:108px;color:#000;transform:scaleX(0.83);">1</span>
<div style="left:457px;top:108px;width:112px;height:15px;background:#fff;"></div>
<div style="left:4px;top:124px;width:63px;height:15px;background:#fff;"></div>
<span class="t" style="left:-2.65px;top:124px;color:#000;width:77.3px;text-align:center;transform-origin:50% 0;transform:scaleX(0.837);">MovAveFS</span>
<div style="left:116px;top:124px;width:56px;height:15px;background:#fff;"></div>
<span class="t" style="left:119px;top:124px;color:#000;transform:scaleX(0.83);">19990626</span>
<div style="left:173px;top:124px;width:46px;height:15px;background:#fff;"></div>
<span class="t" style="left:176px;top:124px;color:#000;transform:scaleX(0.83);">135</span>
<div style="left:342px;top:124px;width:43px;height:15px;background:#fff;"></div>
<span class="t" style="left:345px;top:124px;color:#000;transform:scaleX(0.83);">1</span>
<div style="left:457px;top:124px;width:112px;height:15px;background:#fff;"></div>
<div style="left:4px;top:140px;width:63px;height:15px;background:#fff;"></div>
<span class="t" style="left:-2.5px;top:140px;color:#000;width:77.0px;text-align:center;transform-origin:50% 0;transform:scaleX(0.84);">MovAveOE</span>
<div style="left:116px;top:140px;width:56px;height:15px;background:#fff;"></div>
<span class="t" style="left:119px;top:140px;color:#000;transform:scaleX(0.83);">19990624</span>
<div style="left:173px;top:140px;width:46px;height:15px;background:#fff;"></div>
<span class="t" style="left:176px;top:140px;color:#000;transform:scaleX(0.83);">717</span>
<div style="left:342px;top:140px;width:43px;height:15px;background:#fff;"></div>
<span class="t" style="left:345px;top:140px;color:#000;transform:scaleX(0.83);">1</span>
<div style="left:457px;top:140px;width:112px;height:15px;background:#fff;"></div>
<div style="left:4px;top:156px;width:63px;height:15px;background:#fff;"></div>
<span class="t" style="left:-2.5px;top:156px;color:#000;width:77.0px;text-align:center;transform-origin:50% 0;transform:scaleX(0.84);">MovAveOS</span>
<div style="left:116px;top:156px;width:56px;height:15px;background:#fff;"></div>
<span class="t" style="left:119px;top:156px;color:#000;transform:scaleX(0.83);">19990612</span>
<div style="left:173px;top:156px;width:46px;height:15px;background:#fff;"></div>
<span class="t" style="left:176px;top:156px;color:#000;transform:scaleX(0.83);">934</span>
<div style="left:342px;top:156px;width:43px;height:15px;background:#fff;"></div>
<span class="t" style="left:345px;top:156px;color:#000;transform:scaleX(0.83);">1</span>
<div style="left:457px;top:156px;width:112px;height:15px;background:#fff;"></div>
<div style="left:4px;top:76px;width:63px;height:15px;border:1px dotted #ffff00;"></div>
<span class="t" style="left:71px;top:101px;transform:scaleX(0.798);">Opties</span>
<span class="t" style="left:208.75px;top:101px;width:145.5px;text-align:center;transform-origin:50% 0;transform:scaleX(0.843);">INTERNATIO MULLER</span>
<span class="t" style="left:389px;top:101px;transform:scaleX(0.809);">125: blijf long</span>
</div>
<div id="chartpane" class="pane2" style="left:242px;top:279px;width:579px;height:404px;">
<svg id="chart" width="575" height="400" viewBox="244 281 575 400" style="left:2px;top:2px;overflow:hidden;will-change:transform">
<rect x="244" y="281" width="575" height="400" fill="#c0c0c0"/>
<g shape-rendering="crispEdges">
<rect x="297" y="322" width="469" height="1" fill="#808080"/>
<rect x="297" y="574" width="469" height="1" fill="#808080"/>
<rect x="296" y="313" width="1" height="337" fill="#000"/>
<rect x="296" y="649" width="523" height="1" fill="#000"/>
<rect x="293" y="322" width="5" height="1" fill="#000"/>
<rect x="295" y="329" width="3" height="1" fill="#000"/>
<rect x="295" y="336" width="3" height="1" fill="#000"/>
<rect x="295" y="342" width="3" height="1" fill="#000"/>
<rect x="295" y="349" width="3" height="1" fill="#000"/>
<rect x="293" y="356" width="5" height="1" fill="#000"/>
<rect x="295" y="362" width="3" height="1" fill="#000"/>
<rect x="295" y="369" width="3" height="1" fill="#000"/>
<rect x="295" y="375" width="3" height="1" fill="#000"/>
<rect x="295" y="381" width="3" height="1" fill="#000"/>
<rect x="293" y="388" width="5" height="1" fill="#000"/>
<rect x="295" y="394" width="3" height="1" fill="#000"/>
<rect x="295" y="401" width="3" height="1" fill="#000"/>
<rect x="295" y="407" width="3" height="1" fill="#000"/>
<rect x="295" y="414" width="3" height="1" fill="#000"/>
<rect x="293" y="421" width="5" height="1" fill="#000"/>
<rect x="295" y="427" width="3" height="1" fill="#000"/>
<rect x="295" y="433" width="3" height="1" fill="#000"/>
<rect x="295" y="440" width="3" height="1" fill="#000"/>
<rect x="295" y="446" width="3" height="1" fill="#000"/>
<rect x="293" y="453" width="5" height="1" fill="#000"/>
<rect x="295" y="459" width="3" height="1" fill="#000"/>
<rect x="295" y="466" width="3" height="1" fill="#000"/>
<rect x="295" y="473" width="3" height="1" fill="#000"/>
<rect x="295" y="479" width="3" height="1" fill="#000"/>
<rect x="293" y="486" width="5" height="1" fill="#000"/>
<rect x="295" y="492" width="3" height="1" fill="#000"/>
<rect x="295" y="499" width="3" height="1" fill="#000"/>
<rect x="295" y="505" width="3" height="1" fill="#000"/>
<rect x="295" y="511" width="3" height="1" fill="#000"/>
<rect x="293" y="518" width="5" height="1" fill="#000"/>
<rect x="295" y="524" width="3" height="1" fill="#000"/>
<rect x="295" y="531" width="3" height="1" fill="#000"/>
<rect x="295" y="537" width="3" height="1" fill="#000"/>
<rect x="295" y="544" width="3" height="1" fill="#000"/>
<rect x="293" y="551" width="5" height="1" fill="#000"/>
<rect x="295" y="557" width="3" height="1" fill="#000"/>
<rect x="295" y="564" width="3" height="1" fill="#000"/>
<rect x="295" y="571" width="3" height="1" fill="#000"/>
<rect x="295" y="577" width="3" height="1" fill="#000"/>
<rect x="293" y="584" width="5" height="1" fill="#000"/>
<rect x="295" y="590" width="3" height="1" fill="#000"/>
<rect x="295" y="597" width="3" height="1" fill="#000"/>
<rect x="295" y="604" width="3" height="1" fill="#000"/>
<rect x="295" y="610" width="3" height="1" fill="#000"/>
<rect x="293" y="617" width="5" height="1" fill="#000"/>
<rect x="295" y="623" width="3" height="1" fill="#000"/>
<rect x="295" y="629" width="3" height="1" fill="#000"/>
<rect x="295" y="636" width="3" height="1" fill="#000"/>
<rect x="295" y="642" width="3" height="1" fill="#000"/>
<rect x="293" y="649" width="5" height="1" fill="#000"/>
<rect x="295" y="316" width="3" height="1" fill="#000"/>
<rect x="296" y="647" width="1" height="6" fill="#000"/>
<rect x="306" y="647" width="1" height="4" fill="#000"/>
<rect x="316" y="647" width="1" height="4" fill="#000"/>
<rect x="326" y="647" width="1" height="4" fill="#000"/>
<rect x="337" y="647" width="1" height="4" fill="#000"/>
<rect x="347" y="647" width="1" height="6" fill="#000"/>
<rect x="357" y="647" width="1" height="4" fill="#000"/>
<rect x="367" y="647" width="1" height="4" fill="#000"/>
<rect x="377" y="647" width="1" height="4" fill="#000"/>
<rect x="387" y="647" width="1" height="4" fill="#000"/>
<rect x="398" y="647" width="1" height="6" fill="#000"/>
<rect x="408" y="647" width="1" height="4" fill="#000"/>
<rect x="418" y="647" width="1" height="4" fill="#000"/>
<rect x="428" y="647" width="1" height="4" fill="#000"/>
<rect x="438" y="647" width="1" height="4" fill="#000"/>
<rect x="448" y="647" width="1" height="6" fill="#000"/>
<rect x="458" y="647" width="1" height="4" fill="#000"/>
<rect x="469" y="647" width="1" height="4" fill="#000"/>
<rect x="479" y="647" width="1" height="4" fill="#000"/>
<rect x="489" y="647" width="1" height="4" fill="#000"/>
<rect x="499" y="647" width="1" height="6" fill="#000"/>
<rect x="509" y="647" width="1" height="4" fill="#000"/>
<rect x="519" y="647" width="1" height="4" fill="#000"/>
<rect x="530" y="647" width="1" height="4" fill="#000"/>
<rect x="540" y="647" width="1" height="4" fill="#000"/>
<rect x="550" y="647" width="1" height="6" fill="#000"/>
<rect x="560" y="647" width="1" height="4" fill="#000"/>
<rect x="570" y="647" width="1" height="4" fill="#000"/>
<rect x="580" y="647" width="1" height="4" fill="#000"/>
<rect x="591" y="647" width="1" height="4" fill="#000"/>
<rect x="601" y="647" width="1" height="6" fill="#000"/>
<rect x="611" y="647" width="1" height="4" fill="#000"/>
<rect x="621" y="647" width="1" height="4" fill="#000"/>
<rect x="631" y="647" width="1" height="4" fill="#000"/>
<rect x="641" y="647" width="1" height="4" fill="#000"/>
<rect x="651" y="647" width="1" height="6" fill="#000"/>
<rect x="662" y="647" width="1" height="4" fill="#000"/>
<rect x="672" y="647" width="1" height="4" fill="#000"/>
<rect x="682" y="647" width="1" height="4" fill="#000"/>
<rect x="692" y="647" width="1" height="4" fill="#000"/>
<rect x="702" y="647" width="1" height="6" fill="#000"/>
<rect x="712" y="647" width="1" height="4" fill="#000"/>
<rect x="723" y="647" width="1" height="4" fill="#000"/>
<rect x="733" y="647" width="1" height="4" fill="#000"/>
<rect x="743" y="647" width="1" height="4" fill="#000"/>
<rect x="753" y="647" width="1" height="6" fill="#000"/>
<rect x="763" y="647" width="1" height="4" fill="#000"/>
<rect x="773" y="647" width="1" height="4" fill="#000"/>
<rect x="783" y="647" width="1" height="4" fill="#000"/>
<rect x="794" y="647" width="1" height="4" fill="#000"/>
<rect x="804" y="647" width="1" height="6" fill="#000"/>
<rect x="814" y="647" width="1" height="4" fill="#000"/>
<rect x="431" y="524" width="1" height="125" fill="#00ff00"/>
</g>
<polyline shape-rendering="crispEdges" fill="none" stroke="#ffff00" stroke-width="1.0" stroke-linejoin="round" points="296.8,613.8 301.6,611.5 309.4,606.6 319.1,600.8 330.7,594.6 337.5,593.0 346.2,590.5 355.9,589.2 363.7,587.6 375.3,585.9 385.0,584.9 394.7,584.7 400.6,585.5 414.1,585.5 419.0,586.2 425.8,586.4 437.4,586.1 443.2,584.9 450.0,582.0 472.3,570.0 479.1,565.8 490.7,558.0 502.4,555.1 512.1,550.6 521.8,542.5 536.3,535.3 543.1,529.3 550.9,521.2 564.4,508.5 567.3,503.7 574.1,495.9 580.3,488.2 589.6,483.9 597.4,477.5 605.2,471.7 610.0,468.2 619.7,461.8 629.4,459.3 643.0,457.4 658.5,457.0 673.0,457.0 682.7,456.0 693.4,451.2 705.0,446.9 714.7,444.4 726.4,439.9 736.1,437.2 747.7,433.3 757.4,430.2 766.1,426.9"/>
<rect x="297" y="448" width="469" height="1" fill="#000" shape-rendering="crispEdges"/>
<polyline shape-rendering="crispEdges" fill="none" stroke="#0000ff" stroke-width="1.0" stroke-linejoin="round" points="296.8,448.8 300.7,449.0 304.5,450.2 309.4,449.4 314.2,448.4 318.1,446.5 320.1,447.8 322.0,452.3 326.9,460.1 328.8,464.9 330.7,473.6 333.6,479.5 336.5,483.3 341.4,483.3 344.3,475.6 346.6,470.7 350.5,478.1 355.4,475.6 356.9,479.5 359.8,487.2 364.3,491.1 365.6,486.2 367.6,477.5 369.1,475.0 372.4,473.6 377.3,482.4 381.2,486.8 385.0,495.9 390.5,509.1"/>
<polyline shape-rendering="crispEdges" fill="none" stroke="#000" stroke-width="1.0" stroke-linejoin="round" points="390.5,509.1 395.7,504.7 399.0,503.3 406.0,503.3 409.7,505.3 414.1,505.6 418.4,511.1 420.3,506.6 422.9,500.8 427.3,496.5 431.6,504.3"/>
<polyline shape-rendering="crispEdges" fill="none" stroke="#0000ff" stroke-width="1.0" stroke-linejoin="round" points="431.6,504.3 436.4,494.0 438.4,486.2 440.3,477.5 445.2,483.3 447.5,471.7 450.0,465.9 453.9,464.3 458.1,466.3 462.0,463.4 468.4,458.5 472.9,462.0 477.2,449.4 481.0,453.3 485.9,461.0 488.8,460.4 497.5,460.4 504.3,461.0 507.2,453.3 509.2,450.0 513.0,449.4 515.9,455.2 521.8,458.5 526.6,458.5 531.1,460.4 533.4,452.9 534.8,448.4 537.3,441.6 540.2,430.0 538.7,440.0 542.0,424.1 544.9,404.7 548.8,410.6 553.6,412.5 558.1,405.7 563.3,403.8 567.2,392.1 571.7,385.3 575.9,390.8"/>
<polyline shape-rendering="crispEdges" fill="none" stroke="#000" stroke-width="1.0" stroke-linejoin="round" points="575.9,390.8 576.9,394.1 578.3,402.8 580.2,413.5 588.5,418.3 594.4,414.8 604.1,414.4 608.9,417.3 612.8,416.0 616.7,421.2 620.6,435.8 630.2,437.7 632.9,445.3 635.2,453.5 644.5,453.5 648.4,443.4 653.6,446.3 663.3,447.3 667.4,440.1 671.1,448.2 676.9,441.5 680.8,424.0 685.6,404.6 689.5,418.2 698.2,414.3 707.9,414.7 712.8,420.5 717.6,421.7 726.0,422.5 730.2,416.2 735.5,404.6 739.6,412.4 744.4,411.4 748.3,406.5 753.1,409.1 757.4,406.2 762.2,410.0 766.1,405.0"/>
<polyline shape-rendering="crispEdges" fill="none" stroke="#ff00ff" stroke-width="1.0" stroke-linejoin="round" points="296.8,545.9 298.7,540.7 301.6,535.8 308.4,526.0 314.2,518.2 319.1,513.4 322.0,513.4 326.9,517.3 328.8,521.2 331.7,530.9 335.6,541.6 340.8,553.3 346.2,551.3 351.1,554.2 355.9,555.6 360.8,563.9 364.7,569.4 369.5,562.6 373.0,558.5 377.3,559.5 380.8,561.4 386.6,573.6 389.9,583.3 392.8,588.8 395.7,591.7 399.6,593.4 406.0,593.4 409.7,595.4 414.1,595.6 418.4,599.4 423.8,593.0 427.7,588.2 431.6,584.9 435.8,577.5 438.4,567.8 440.9,559.1 445.2,549.4 447.1,541.6 448.7,533.9 450.0,528.9 453.9,515.3 458.1,504.7 469.4,483.3 481.0,461.6 504.3,461.4 513.0,449.4 519.8,449.4 526.6,450.4 531.5,452.3 534.8,448.4 537.3,440.7 539.6,430.0 537.2,440.0 541.0,424.1 544.5,404.7 546.9,391.2 549.8,382.4 553.6,374.7 557.5,363.0 563.3,351.4 568.2,333.9 571.7,323.3 576.3,318.4 577.9,323.3 579.8,330.1 582.7,334.9 587.6,340.7 593.4,346.5 600.2,356.2 605.0,360.1 608.9,365.9 612.8,367.9 616.3,372.7 618.6,379.5 620.9,390.2 624.4,394.1 630.6,400.9 634.1,414.4 638.0,429.9 639.1,435.6 644.9,445.3 652.7,449.6 658.5,450.8 662.8,452.7 667.8,449.6 672.1,453.5 676.9,450.8 679.8,439.5 682.7,424.0 687.6,411.4 691.5,405.6 699.2,395.9 707.0,391.0 714.7,394.5 726.4,400.3 730.2,397.8 735.1,388.7 739.0,387.2 743.8,386.2 748.7,382.3 753.5,382.3 757.4,380.0 762.2,382.3 766.1,380.0"/>
<g font-family="Liberation Mono, monospace" font-size="10.6px" stroke="#000" stroke-width="0.15">
<text transform="translate(291.0,328.0) scale(1.09,1)" text-anchor="end" fill="#000">2.0</text>
<text transform="translate(291.0,360.4) scale(1.09,1)" text-anchor="end" fill="#000">1.5</text>
<text transform="translate(291.0,392.9) scale(1.09,1)" text-anchor="end" fill="#000">0.9</text>
<text transform="translate(291.0,425.4) scale(1.09,1)" text-anchor="end" fill="#000">0.4</text>
<text transform="translate(291.0,457.8) scale(1.09,1)" text-anchor="end" fill="#000">-0.1</text>
<text transform="translate(291.0,490.2) scale(1.09,1)" text-anchor="end" fill="#000">-0.6</text>
<text transform="translate(291.0,522.7) scale(1.09,1)" text-anchor="end" fill="#000">-1.1</text>
<text transform="translate(291.0,555.2) scale(1.09,1)" text-anchor="end" fill="#000">-1.6</text>
<text transform="translate(291.0,587.6) scale(1.09,1)" text-anchor="end" fill="#000">-2.2</text>
<text transform="translate(291.0,620.0) scale(1.09,1)" text-anchor="end" fill="#000">-2.7</text>
<text transform="translate(291.0,652.5) scale(1.09,1)" text-anchor="end" fill="#000">-3.2</text>
<text transform="translate(281.0,663.8) scale(1.09,1)" text-anchor="start" fill="#000">990201</text>
<text transform="translate(331.8,663.8) scale(1.09,1)" text-anchor="start" fill="#000">990216</text>
<text transform="translate(382.6,663.8) scale(1.09,1)" text-anchor="start" fill="#000">990303</text>
<text transform="translate(433.4,663.8) scale(1.09,1)" text-anchor="start" fill="#000">990321</text>
<text transform="translate(484.2,663.8) scale(1.09,1)" text-anchor="start" fill="#000">990405</text>
<text transform="translate(535.0,663.8) scale(1.09,1)" text-anchor="start" fill="#000">990420</text>
<text transform="translate(585.8,663.8) scale(1.09,1)" text-anchor="start" fill="#000">990505</text>
<text transform="translate(636.6,663.8) scale(1.09,1)" text-anchor="start" fill="#000">990523</text>
<text transform="translate(687.4,663.8) scale(1.09,1)" text-anchor="start" fill="#000">990607</text>
<text transform="translate(738.2,663.8) scale(1.09,1)" text-anchor="start" fill="#000">990622</text>
<text transform="translate(789.0,663.8) scale(1.09,1)" text-anchor="start" fill="#000">990706</text>
<g stroke-width="0.35"><text transform="translate(418.0,676.5) scale(1.09,1)" text-anchor="start" fill="#000">Datum</text><text transform="translate(253.7,551.5) rotate(-90) scale(1.09,1)" text-anchor="start" fill="#000">Waarde</text></g>
</g>
<g font-family="Liberation Mono, monospace" font-size="10.6px" stroke="#f00" stroke-width="0.2"><text transform="translate(254.3,669.8) scale(1.09,1)" text-anchor="start" fill="#f00">Z</text></g>
</svg>
</div>
<div id="status1" style="left:4px;top:684px;width:817px;height:18px;">
<div class="sunk" style="left:0px;top:1px;width:150px;height:16px;"></div>
<span class="t" style="left:3px;top:1px;transform:scaleX(0.807);">AEX</span>
<div class="sunk" style="left:152px;top:1px;width:98px;height:16px;"></div>
<span class="t" style="left:155px;top:1px;transform:scaleX(0.83);">19980720:597.01</span>
<div class="sunk" style="left:252px;top:1px;width:98px;height:16px;"></div>
<span class="t" style="left:255px;top:1px;transform:scaleX(0.83);">19981008:375.58</span>
<div class="sunk" style="left:352px;top:1px;width:98px;height:16px;"></div>
<span class="t" style="left:355px;top:1px;transform:scaleX(0.83);">19990106:583.66</span>
<div class="sunk" style="left:452px;top:1px;width:98px;height:16px;"></div>
<span class="t" style="left:455px;top:1px;transform:scaleX(0.838);">19990113:507.29</span>
<div class="sunk" style="left:552px;top:1px;width:68px;height:16px;"></div>
<span class="t" style="left:555px;top:1px;transform:scaleX(0.83);">561.65</span>
<div class="sunk" style="left:622px;top:1px;width:68px;height:16px;"></div>
<span class="t" style="left:625px;top:1px;transform:scaleX(0.786);">Jaar:4.7%</span>
<div class="sunk" style="left:692px;top:1px;width:68px;height:16px;"></div>
<span class="t" style="left:695px;top:1px;transform:scaleX(0.808);">Maand:1.7%</span>
<div class="sunk" style="left:762px;top:1px;width:55px;height:16px;"></div>
<span class="t" style="left:765px;top:1px;transform:scaleX(0.83);">Week:-3.6</span>
</div>
<div id="status2" style="left:4px;top:702px;width:817px;height:18px;">
<span class="t" style="left:3px;top:1px;transform:scaleX(0.818);">Voor Hulp, toets F1</span>
<div class="sunk" style="left:703px;top:1px;width:27px;height:16px;"></div>
<div class="sunk" style="left:732px;top:1px;width:30px;height:16px;"></div>
<span class="t" style="left:735px;top:1px;transform:scaleX(0.844);">NUM</span>
<div class="sunk" style="left:764px;top:1px;width:35px;height:16px;"></div>
<svg width="13" height="13" style="left:804px;top:4px" shape-rendering="crispEdges"><path d="M12 0L0 12M12 4L4 12M12 8L8 12" stroke="#fff"/><path d="M12 1L1 12M12 2L2 12M12 5L5 12M12 6L6 12M12 9L9 12M12 10L10 12" stroke="#808080"/></svg>
</div>
</div>
</body></html>
